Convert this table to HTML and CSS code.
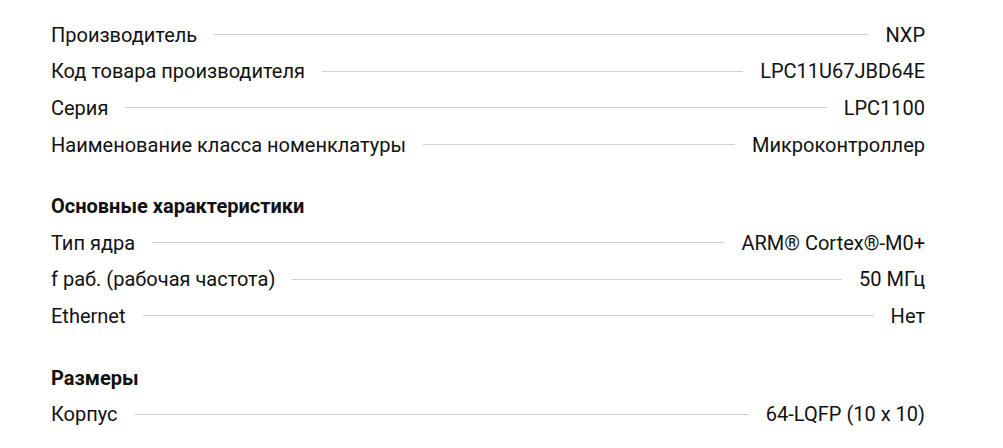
FILE: index.html
```html
<!DOCTYPE html>
<html lang="ru">
<head>
<meta charset="utf-8">
<link rel="stylesheet" href="styles.css">
</head>
<body>
<div class="specs">
  <div class="group">
    <div class="row"><span class="label">Производитель</span><span class="line"></span><span class="value">NXP</span></div>
    <div class="row"><span class="label">Код товара производителя</span><span class="line"></span><span class="value">LPC11U67JBD64E</span></div>
    <div class="row"><span class="label">Серия</span><span class="line"></span><span class="value">LPC1100</span></div>
    <div class="row"><span class="label">Наименование класса номенклатуры</span><span class="line"></span><span class="value">Микроконтроллер</span></div>
  </div>
  <div class="group">
    <div class="heading">Основные характеристики</div>
    <div class="row"><span class="label">Тип ядра</span><span class="line"></span><span class="value">ARM® Cortex®-M0+</span></div>
    <div class="row"><span class="label">f раб. (рабочая частота)</span><span class="line"></span><span class="value">50 МГц</span></div>
    <div class="row"><span class="label">Ethernet</span><span class="line"></span><span class="value">Нет</span></div>
  </div>
  <div class="group">
    <div class="heading">Размеры</div>
    <div class="row"><span class="label">Корпус</span><span class="line"></span><span class="value">64-LQFP (10 x 10)</span></div>
  </div>
</div>
</body>
</html>
```
FILE: styles.css
```css
html, body {
  margin: 0;
  padding: 0;
  background: #fff;
}
body {
  font-family: Roboto, "Noto Sans", sans-serif;
  color: #111;
  font-size: 20px;
}
.specs {
  width: 874px;
  margin-left: 51px;
  padding-top: 16.5px;
  display: flex;
  flex-direction: column;
  gap: 25px;
}
.group {
  display: flex;
  flex-direction: column;
}
.row, .heading {
  height: 36.6px;
  display: flex;
  align-items: center;
}
.heading {
  font-weight: 700;
}
.label, .value {
  white-space: nowrap;
}
.line {
  flex: 1;
  height: 1px;
  background: #cfcfcf;
  margin: 0 17px;
}
```
